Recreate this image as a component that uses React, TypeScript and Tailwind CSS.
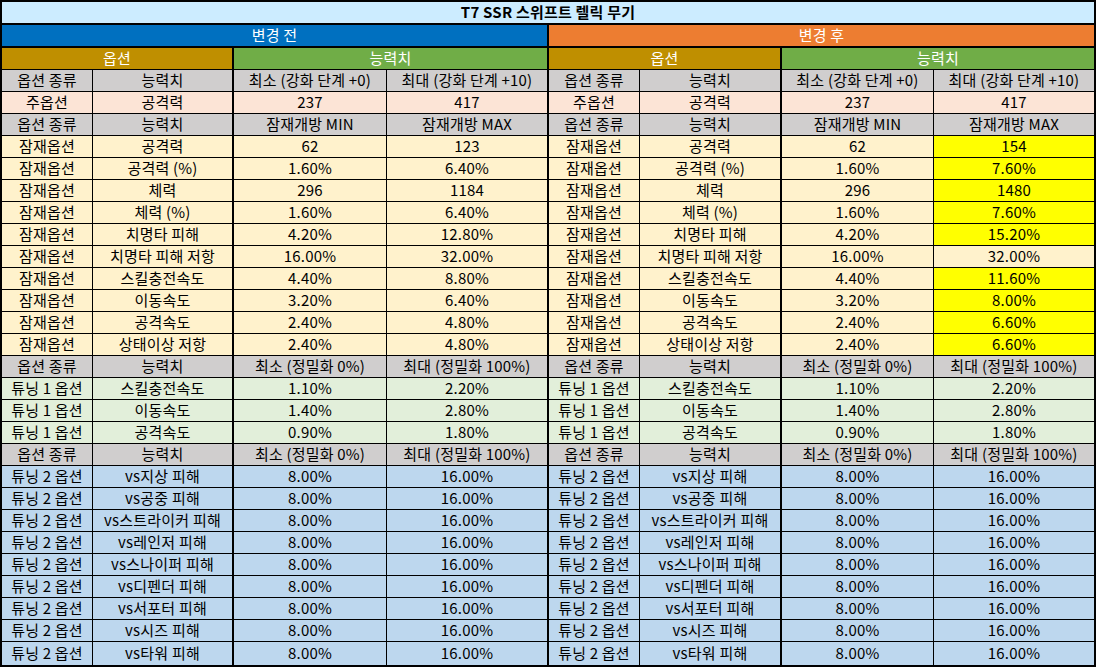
type Cell = { text: string; span?: number; bg?: string; bold?: boolean };

// right border per column (1-based index of the cell's last column)
const rightBorder: Record<number, string> = {
  1: "border-r",
  2: "border-r-2",
  3: "border-r",
  4: "border-r-2",
  5: "border-r",
  6: "border-r-2",
  7: "border-r",
  8: "",
};

const spanClass: Record<number, string> = {
  1: "col-span-1",
  2: "col-span-2",
  4: "col-span-4",
  8: "col-span-8",
};

const GRAY = "bg-[#d0cece]";
const PEACH = "bg-[#fce4d6]";
const CREAM = "bg-[#fff2cc]";
const YELLOW = "bg-[#ffff00]";
const MINT = "bg-[#e2efda]";
const SKY = "bg-[#bdd7ee]";

function Row({ cells, h = "h-[22px]", bottom = "border-b" }: { cells: Cell[]; h?: string; bottom?: string }) {
  let col = 0;
  return (
    <div className={`grid grid-cols-[91px_141px_153px_162px_91px_142px_152px_160px] ${h}`}>
      {cells.map((c, i) => {
        const span = c.span ?? 1;
        col += span;
        return (
          <div
            key={i}
            className={`flex items-center justify-center overflow-hidden whitespace-nowrap border-black ${spanClass[span]} ${rightBorder[col]} ${bottom} ${c.bg ?? ""} ${c.bold ? "font-bold" : ""}`}
          >
            {c.text}
          </div>
        );
      })}
    </div>
  );
}

const potential: [string, string, string, string, boolean][] = [
  ["공격력", "62", "123", "154", true],
  ["공격력 (%)", "1.60%", "6.40%", "7.60%", true],
  ["체력", "296", "1184", "1480", true],
  ["체력 (%)", "1.60%", "6.40%", "7.60%", true],
  ["치명타 피해", "4.20%", "12.80%", "15.20%", true],
  ["치명타 피해 저항", "16.00%", "32.00%", "32.00%", false],
  ["스킬충전속도", "4.40%", "8.80%", "11.60%", true],
  ["이동속도", "3.20%", "6.40%", "8.00%", true],
  ["공격속도", "2.40%", "4.80%", "6.60%", true],
  ["상태이상 저항", "2.40%", "4.80%", "6.60%", true],
];

const tuning1: [string, string, string][] = [
  ["스킬충전속도", "1.10%", "2.20%"],
  ["이동속도", "1.40%", "2.80%"],
  ["공격속도", "0.90%", "1.80%"],
];

const tuning2 = ["vs지상 피해", "vs공중 피해", "vs스트라이커 피해", "vs레인저 피해", "vs스나이퍼 피해", "vs디펜더 피해", "vs서포터 피해", "vs시즈 피해", "vs타워 피해"];

function both(a: string, b: string, c: string, d: string, bg: string, dRight?: string, rightBg?: string): Cell[] {
  return [
    { text: a, bg },
    { text: b, bg },
    { text: c, bg },
    { text: d, bg },
    { text: a, bg },
    { text: b, bg },
    { text: c, bg },
    { text: dRight ?? d, bg: rightBg ?? bg },
  ];
}

export default function App() {
  const header = (c: string, d: string) => both("옵션 종류", "능력치", c, d, GRAY);
  return (
    <div className="w-[1096px] h-[667px] overflow-hidden bg-white">
      <div
        className="w-[1096px] border-2 border-black text-[15px] tracking-[0.2px] text-black"
        style={{ fontFamily: '"Noto Sans CJK KR", "Noto Sans", sans-serif' }}
      >
        <Row h="h-[23px]" bottom="border-b-2" cells={[{ text: "T7 SSR 스위프트 렐릭 무기", span: 8, bg: "bg-[#ccecff]", bold: true }]} />
        <div className="text-white">
          <Row
            h="h-[23px]"
            bottom="border-b-2"
            cells={[
              { text: "변경 전", span: 4, bg: "bg-[#0070c0]" },
              { text: "변경 후", span: 4, bg: "bg-[#ed7d31]" },
            ]}
          />
          <Row
            cells={[
              { text: "옵션", span: 2, bg: "bg-[#bf8f00]" },
              { text: "능력치", span: 2, bg: "bg-[#70ad47]" },
              { text: "옵션", span: 2, bg: "bg-[#bf8f00]" },
              { text: "능력치", span: 2, bg: "bg-[#70ad47]" },
            ]}
          />
        </div>
        <Row cells={header("최소 (강화 단계 +0)", "최대 (강화 단계 +10)")} />
        <Row cells={both("주옵션", "공격력", "237", "417", PEACH)} />
        <Row cells={header("잠재개방 MIN", "잠재개방 MAX")} />
        {potential.map(([name, min, maxL, maxR, hi]) => (
          <Row key={name} cells={both("잠재옵션", name, min, maxL, CREAM, maxR, hi ? YELLOW : CREAM)} />
        ))}
        <Row cells={header("최소 (정밀화 0%)", "최대 (정밀화 100%)")} />
        {tuning1.map(([name, min, max]) => (
          <Row key={name} cells={both("튜닝 1 옵션", name, min, max, MINT)} />
        ))}
        <Row cells={header("최소 (정밀화 0%)", "최대 (정밀화 100%)")} />
        {tuning2.map((name, i) => (
          <Row
            key={name}
            h={i === tuning2.length - 1 ? "h-[23px]" : "h-[22px]"}
            bottom={i === tuning2.length - 1 ? "" : "border-b"}
            cells={both("튜닝 2 옵션", name, "8.00%", "16.00%", SKY)}
          />
        ))}
      </div>
    </div>
  );
}
